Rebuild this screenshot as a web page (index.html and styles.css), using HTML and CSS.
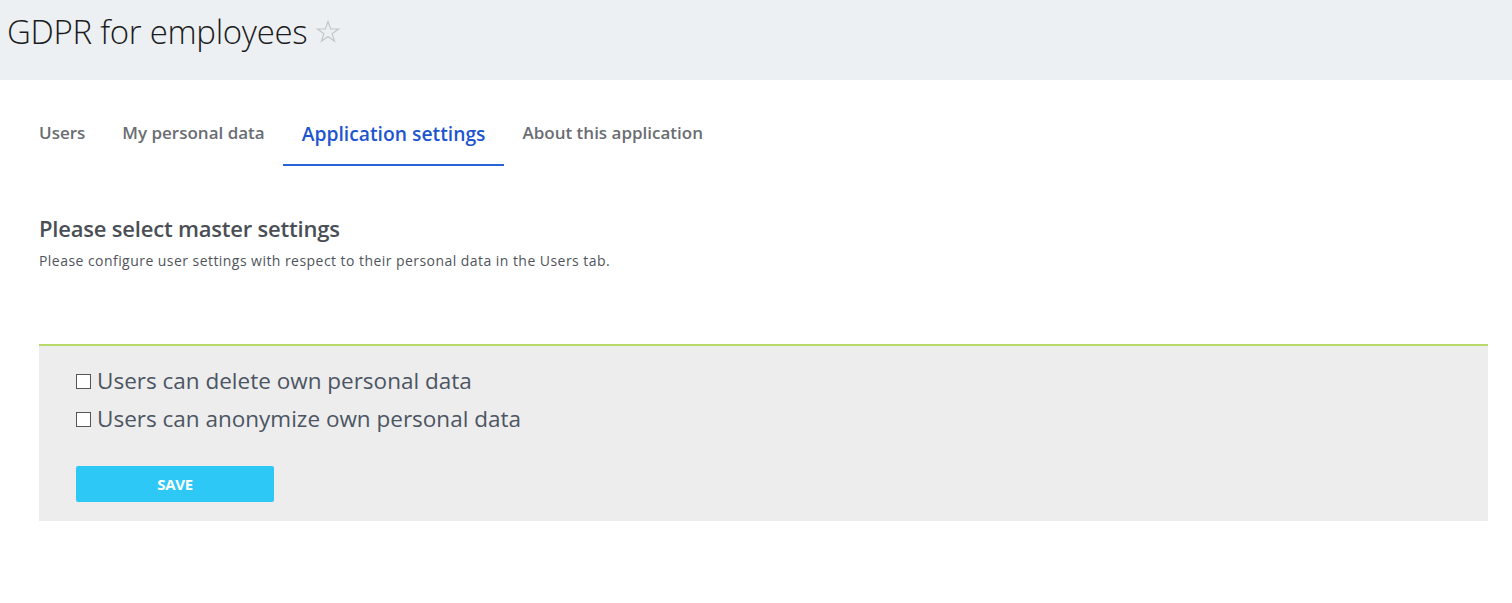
FILE: index.html
```html
<!DOCTYPE html>
<html lang="en">
<head>
<meta charset="utf-8">
<title>GDPR for employees</title>
<link rel="stylesheet" href="styles.css">
</head>
<body>
<header class="page-header">
  <h1 class="page-title">GDPR for employees</h1>
  <svg class="star" width="24" height="24" viewBox="0 0 24 24" aria-hidden="true">
    <polygon points="12,1.5 14.6,9 22.5,9 16.1,13.7 18.5,21.3 12,16.6 5.5,21.3 7.9,13.7 1.5,9 9.4,9" fill="none" stroke="#c3c6ca" stroke-width="1.2" stroke-linejoin="miter"/>
  </svg>
</header>
<main class="content">
  <nav class="tabs">
    <a class="tab">Users</a>
    <a class="tab">My personal data</a>
    <a class="tab active">Application settings</a>
    <a class="tab">About this application</a>
  </nav>
  <section class="intro">
    <h2 class="section-title">Please select master settings</h2>
    <p class="section-desc">Please configure user settings with respect to their personal data in the Users tab.</p>
  </section>
  <section class="panel">
    <label class="option"><span class="box"></span>Users can delete own personal data</label>
    <label class="option"><span class="box"></span>Users can anonymize own personal data</label>
    <button class="save">SAVE</button>
  </section>
</main>
</body>
</html>
```
FILE: styles.css
```css
* { box-sizing: border-box; }
html, body { margin: 0; padding: 0; background: #fff; }
body { font-family: "Open Sans", "Liberation Sans", sans-serif; color: #4b5058; }

.page-header {
  height: 80px;
  background: #edf0f3;
  display: flex;
  align-items: flex-start;
  padding: 9px 0 0 7px;
  gap: 9px;
}
.page-title {
  margin: 0;
  font-weight: 300;
  font-size: 33px;
  line-height: 46px;
  color: #1a1c20;
  letter-spacing: -0.3px;
}
.star { margin-top: 11px; }

.content { padding: 0 24px 0 39px; }

.tabs {
  display: flex;
  height: 86px;
  align-items: flex-end;
}
.tab {
  display: block;
  font-size: 17px;
  font-weight: 600;
  color: #6a6d72;
  padding: 0 18.5px 19px;
  line-height: 24px;
  border-bottom: 2px solid transparent;
  cursor: pointer;
}
.tab:first-child { padding-left: 0; }
.tab.active {
  font-size: 19.3px;
  padding-bottom: 18px;
  color: #1d55d0;
  border-bottom-color: #2a62d8;
}

.intro { padding-top: 47px; height: 178px; }
.section-title {
  margin: 0;
  font-size: 22px;
  font-weight: 600;
  color: #4a4f56;
  letter-spacing: -0.2px;
  line-height: 30px;
}
.section-desc {
  margin: 8px 0 0;
  font-size: 14px;
  line-height: 20px;
  letter-spacing: 0.45px;
  color: #50555c;
}

.panel {
  background: #ededed;
  border-top: 2px solid #b8da6b;
  height: 177px;
  padding: 16px 37px 0;
  display: flex;
  flex-direction: column;
  align-items: flex-start;
}
.option {
  display: flex;
  align-items: center;
  font-size: 22.5px;
  line-height: 38px;
  height: 38px;
  color: #4c5563;
}
.box {
  width: 15px;
  height: 15px;
  border: 1.5px solid #555;
  background: #fff;
  margin-right: 6px;
  flex: none;
}
.save {
  margin-top: 28px;
  width: 198px;
  height: 36px;
  border: none;
  border-radius: 2px;
  background: #2ec8f7;
  color: #fff;
  font-family: "Open Sans", "Liberation Sans", sans-serif;
  font-weight: 700;
  font-size: 15px;
  letter-spacing: -0.3px;
  cursor: pointer;
}
```
